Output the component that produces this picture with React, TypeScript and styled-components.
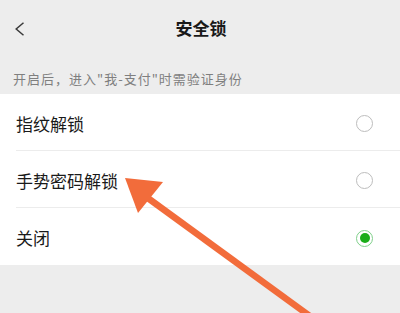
import styled, { createGlobalStyle } from "styled-components";

const GlobalStyle = createGlobalStyle`
  html, body {
    margin: 0;
    padding: 0;
    background: #ededed;
  }
  body {
    font-family: "Noto Sans CJK SC", "Noto Sans", sans-serif;
  }
`;

const Page = styled.div`
  position: relative;
  width: 400px;
  height: 313px;
  overflow: hidden;
  background: #ededed;
`;

const Header = styled.div`
  height: 56px;
  display: flex;
  align-items: center;
  justify-content: center;
  position: relative;
`;

const BackButton = styled.div`
  position: absolute;
  left: 13px;
  top: 22px;
  width: 12px;
  height: 14px;
  display: flex;
  align-items: center;
  justify-content: center;
`;

const Title = styled.h1`
  margin: 0 0 2px 0;
  padding-left: 2px;
  font-size: 17px;
  font-weight: 700;
  color: #191919;
`;

const Hint = styled.p`
  margin: 0;
  padding: 13px 13px 0;
  height: 25px;
  font-size: 13px;
  line-height: 20px;
  letter-spacing: 1px;
  color: #7f7f7f;
`;

const List = styled.div`
  background: #ffffff;
  display: flex;
  flex-direction: column;
`;

const Row = styled.div<{ $last?: boolean }>`
  height: 56px;
  margin-left: 16px;
  padding-right: 27px;
  display: flex;
  align-items: center;
  justify-content: space-between;
  border-bottom: ${(props) => (props.$last ? "none" : "1px solid #ececec")};
  &:last-child {
    height: 57px;
  }
`;

const Label = styled.span`
  font-size: 17px;
  color: #1a1a1a;
  padding-top: 2px;
`;

const Radio = styled.span<{ $checked?: boolean }>`
  width: 17px;
  height: 17px;
  box-sizing: border-box;
  border-radius: 50%;
  border: 1.5px solid ${(props) => (props.$checked ? "#7fd08a" : "#bdbdbd")};
  display: flex;
  align-items: center;
  justify-content: center;
  margin-top: 3px;
  &::after {
    content: "";
    display: ${(props) => (props.$checked ? "block" : "none")};
    width: 10px;
    height: 10px;
    border-radius: 50%;
    background: #1aad19;
  }
`;

const Arrow = styled.svg`
  position: absolute;
  left: 0;
  top: 0;
  pointer-events: none;
`;

const options = [
  { label: "指纹解锁", checked: false },
  { label: "手势密码解锁", checked: false },
  { label: "关闭", checked: true },
];

const App = () => {
  return (
    <>
      <GlobalStyle />
      <Page>
        <Header>
          <BackButton>
            <svg width="11" height="14" viewBox="0 0 11 14">
              <path
                d="M9.5 0.8 L2.2 7 L9.5 13.2"
                fill="none"
                stroke="#3a3a3a"
                strokeWidth="1.5"
              />
            </svg>
          </BackButton>
          <Title>安全锁</Title>
        </Header>
        <Hint>开启后，进入"我-支付"时需验证身份</Hint>
        <List>
          {options.map((opt, i) => (
            <Row key={opt.label} $last={i === options.length - 1}>
              <Label>{opt.label}</Label>
              <Radio $checked={opt.checked} />
            </Row>
          ))}
        </List>
        <Arrow width="400" height="313" viewBox="0 0 400 313">
          <line
            x1="145"
            y1="196"
            x2="318"
            y2="322"
            stroke="#f26c3b"
            strokeWidth="6.5"
          />
          <polygon points="125,178 163,182 138,213" fill="#f26c3b" />
        </Arrow>
      </Page>
    </>
  );
};

export default App;
